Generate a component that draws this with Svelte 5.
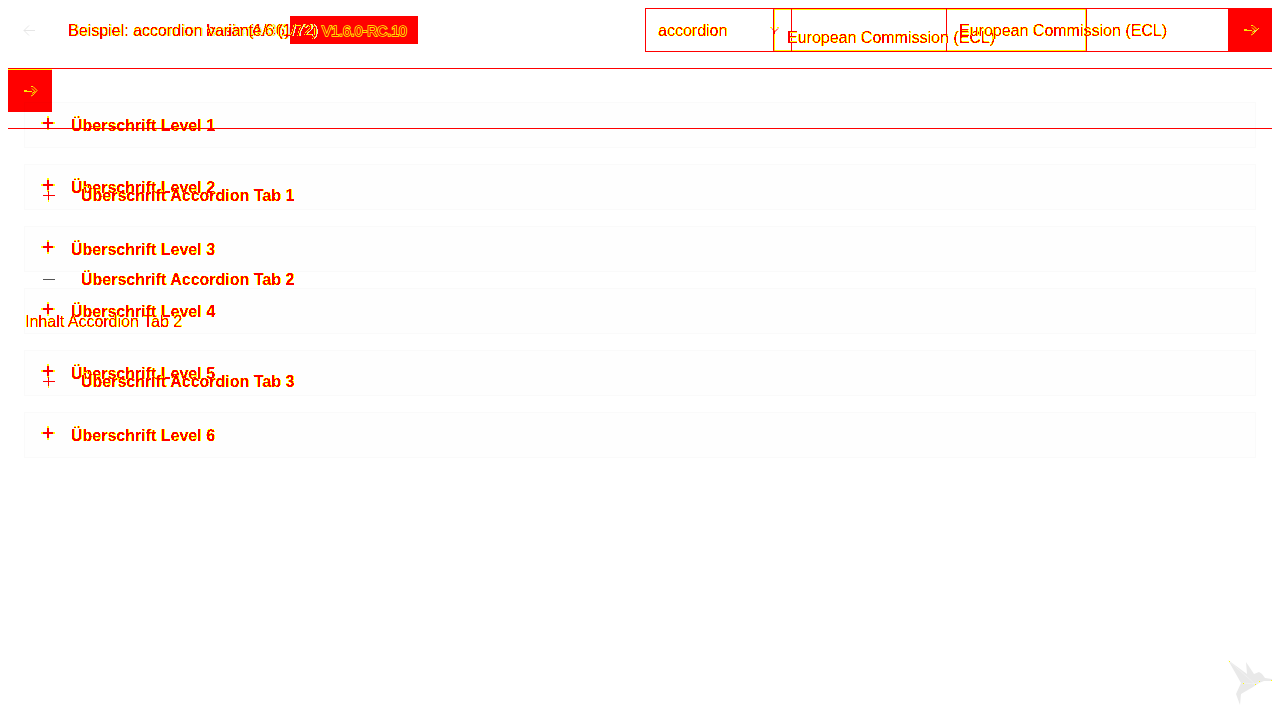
<script>
  const levels = [1, 2, 3, 4, 5, 6];
  const tabs = [
    { n: 1, open: false },
    { n: 2, open: true },
    { n: 3, open: false }
  ];
</script>

{#snippet arrow()}
  <svg width="14" height="12" viewBox="0 0 14 12" aria-hidden="true">
    <path d="M0 6.5h8M0 5.5h3M7 1.5h2l4 4-4 4.5-2 1M8 3.5l3 3-3 2" fill="none" stroke="#ff0" stroke-width=".9" />
  </svg>
{/snippet}

<svg class="defs" width="0" height="0" aria-hidden="true">
  <filter id="ink" x="-5%" y="-20%" width="110%" height="140%" color-interpolation-filters="sRGB">
    <feColorMatrix values="0 0 0 0 1  0 0 0 1 0  0 0 0 0 0  0 0 0 1 0" />
    <feComponentTransfer>
      <feFuncG type="discrete" tableValues="1 1 1 1 1 1 0 0 0 0" />
      <feFuncA type="discrete" tableValues="0 1 1 1 1 1 1 1 1 1 1 1 1 1 1 1" />
    </feComponentTransfer>
  </filter>
</svg>

<div class="page">
  <section class="layer">
    <header class="bar">
      <span class="version"><span class="outline">V1.6.0-RC.10</span></span>
      <span class="grow"></span>
      <span class="chooser">
        <svg class="caret" width="9" height="7" viewBox="0 0 9 7" aria-hidden="true"><path d="M2 1.5l3 3 3-3M4.5 4v3" fill="none" stroke="#f00" /><path d="M0 .5h2M7 .5h2" stroke="#ff0" /></svg>
        <span class="ink">European Commission (ECL)</span>
      </span>
    </header>
    <div class="next">{@render arrow()}</div>
    <div class="rule low"></div>
  </section>

  <section class="layer">
    <header class="bar">
      <span class="back">
        <svg width="13" height="12" viewBox="0 0 13 12" aria-hidden="true"><path d="M12 6.5H1M6 1.5l-5 5 5 5" fill="none" stroke="#e6e6e6" /></svg>
      </span>
      <span class="title"><span class="edge">Beispiel: accordion</span><span class="names"><span class="edge">basic (1/36)</span><span class="edge strong">variante 6 (1/72)</span></span></span>
      <span class="grow"></span>
      <span class="select first"><span class="ink">accordion</span></span>
      <span class="select second"></span>
      <span class="select third"><span class="ink">European Commission (ECL)</span></span>
      <span class="go">{@render arrow()}<svg class="slash" width="9" height="9" viewBox="0 0 9 9" aria-hidden="true"><path d="M1 8l6-6" stroke="#ff0" /><path d="M2 5h2" stroke="#ddd" /></svg></span>
    </header>
    <div class="rule"></div>
    <div class="levels">
      {#each levels as n}
        <div class="item">
          <svg class="plus" width="14" height="14" viewBox="0 0 14 14" shape-rendering="crispEdges" aria-hidden="true">
            <path d="M0 6h14v2H0zM6 0h2v14H6z" fill="#ff0" />
            <path d="M2 6h10v2H2zM6 2h2v10H6z" fill="#f00" />
          </svg>
          <b class="ink">Überschrift Level {n}</b>
        </div>
      {/each}
    </div>
  </section>

  <section class="layer tabs">
    {#each tabs as t}
      <div class="tab" class:open={t.open}>
        <svg width="14" height="14" viewBox="0 0 14 14" shape-rendering="crispEdges" aria-hidden="true">
          <path d="M1 6.5h12" stroke={t.open ? '#555' : '#f00'} />
          {#if !t.open}<path d="M6.5 1v12" stroke="#ff0" /><path d="M6.5 2v9" stroke="#f00" />{/if}
        </svg>
        <b class="ink">Überschrift Accordion Tab {t.n}</b>
      </div>
      {#if t.open}<p class="panel"><span class="ink">Inhalt Accordion Tab {t.n}</span></p>{/if}
    {/each}
  </section>

  <svg class="bird" width="50" height="50" viewBox="0 0 50 50" aria-hidden="true">
    <path d="M2 4l19 14-1-12 8 12 5-2 3 2 3 4 7 1v2h-8l-5 2-6 4-12 7-1 11-4-11 5-11z" fill="#e9e9e9" />
    <path d="M17 27l12 1 5-3M3 5l26 23" fill="none" stroke="#f5f5f5" stroke-width=".6" />
    <path d="M3 5h1v1H3zM17 27h1v1h-1zM29 28h1v1h-1zM33 25h1v1h-1zM45 24h1v1h-1z" fill="#ff0" />
  </svg>
</div>

<style>
  :global(body) { background: #fff; overflow: hidden; }
  .defs { position: absolute; }
  .page {
    display: grid;
    height: 720px;
    box-sizing: border-box;
    padding: 8px;
    font: 16px/20px "Liberation Sans", Arial, sans-serif;
    color: #f00;
  }
  .layer { grid-area: 1 / 1; min-width: 0; }
  .ink, .edge, .outline { display: inline-block; white-space: nowrap; }
  .ink { filter: url(#ink); }
  .edge { filter: url(#ink) drop-shadow(1px 0 #e4e4e4); }
  .outline { color: #f00; -webkit-text-stroke: 1.5px #ff0; paint-order: stroke fill; }
  .bar { display: flex; height: 44px; align-items: center; }
  .back { width: 60px; box-sizing: border-box; padding-left: 15px; display: flex; }
  .grow { flex: 1; }
  .title { display: flex; gap: 4px; padding-top: 2px; }
  .names { display: grid; width: 110px; }
  .names .edge { grid-area: 1 / 1; }
  .names .strong { margin-left: 1px; letter-spacing: -0.4px; }
  .select { height: 44px; box-sizing: border-box; border: 1px solid #f00; display: flex; align-items: center; padding: 2px 0 0 12px; }
  .first { width: 147px; }
  .second { width: 155px; border-left: 0; }
  .third { width: 281px; border-left: 0; border-right: 0; }
  .go, .next { width: 44px; background: #f00; display: flex; align-items: center; justify-content: center; }
  .go { height: 44px; }
  .go svg, .next svg { margin-left: 2px; }
  .go .slash { margin-left: -6px; margin-right: -3px; }
  .rule { height: 1px; background: #f00; margin-top: 16px; }
  .levels { padding: 33px 16px 0; display: grid; gap: 16px; mix-blend-mode: multiply; }
  .item { height: 46px; box-sizing: border-box; border: 1px solid #fafafa; background: #fefefe; display: flex; align-items: center; padding-left: 16px; gap: 16px; }
  .item .ink { padding-top: 2px; }
  .plus { margin-top: -4px; }
  .version { margin-left: 282px; width: 128px; height: 28px; padding: 2px 0 0 32px; box-sizing: border-box; background: #f00; display: flex; align-items: center; font-size: 14px; }
  .chooser { width: 314px; height: 44px; margin-right: 185px; box-sizing: border-box; border: 1px solid #f00; box-shadow: inset 0 0 0 1px #ff0; border-radius: 2px; display: flex; align-items: center; padding-top: 15px; }
  .caret { margin: -14px 8px 0 -4px; }
  .next { height: 42px; margin-top: 18px; box-shadow: 0 -1px #ff0; }
  .rule.low { margin-top: 16px; }
  .tabs { padding: 166px 16px 0; }
  .tab { height: 44px; display: flex; align-items: center; padding-left: 18px; gap: 25px; margin-bottom: 40px; }
  .tab.open { margin-bottom: 10px; }
  .panel { margin: 0 0 28px 1px; height: 20px; }
  .bird { grid-area: 1 / 1; align-self: end; justify-self: end; margin: 0 -4px 6px 0; }
</style>
